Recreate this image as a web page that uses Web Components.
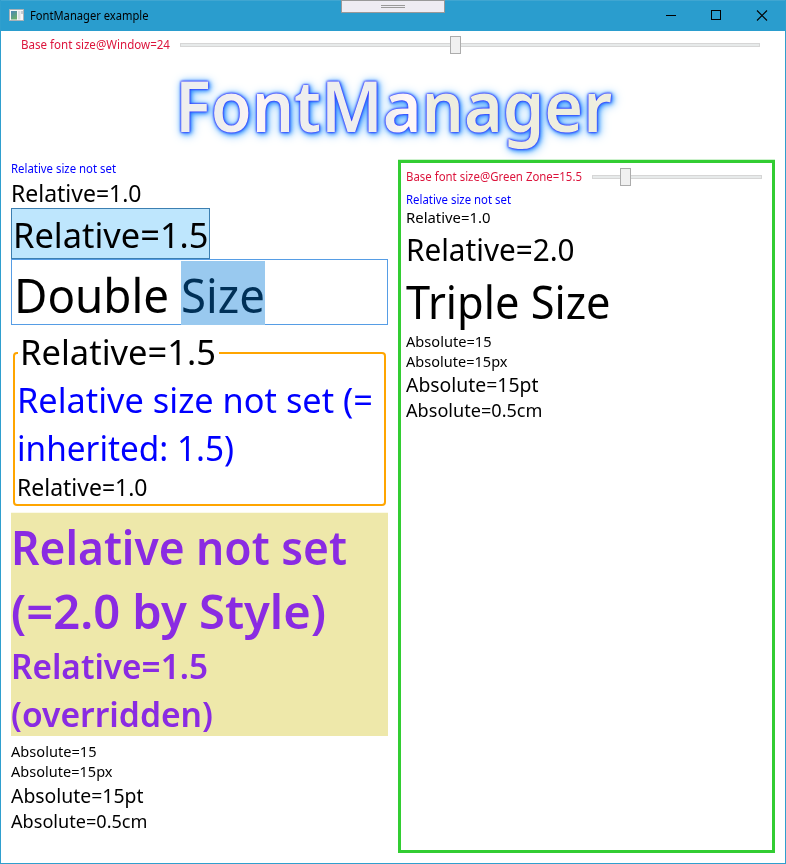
<!DOCTYPE html>
<html lang="en">
<head>
<meta charset="utf-8">
<title>FontManager example</title>
<style>
html, body { margin: 0; height: 100%; background: #fff; overflow: hidden; }
body { font-family: "Noto Sans", "Open Sans", sans-serif; color: #000; }
</style>
</head>
<body>
<app-window></app-window>
<script>
// One line of text: size sets the em, w the advance width, dy the baseline nudge.
class TextLine extends HTMLElement {
  connectedCallback() {
    const s = parseFloat(this.getAttribute('size'));
    const w = parseFloat(this.getAttribute('w'));
    const dy = parseFloat(this.getAttribute('dy') || '1');
    const root = this.attachShadow({ mode: 'open' });
    root.innerHTML = `<style>
      :host { display: block; flex: none; width: ${w}px; height: ${s * 1.33}px; white-space: pre; }
      span { display: block; width: max-content; font-size: ${s * 0.975}px; line-height: ${s * 1.33}px;
             padding-top: ${s * 0.036 + dy}px; transform-origin: 0 0;
             background: var(--text-fill, none); -webkit-background-clip: text; background-clip: text; }
    </style><span><slot></slot></span>`;
    const span = root.querySelector('span');
    const natural = span.getBoundingClientRect().width;
    if (natural) span.style.transform = `scaleX(${w / natural})`;
  }
}

class SizeSlider extends HTMLElement {
  connectedCallback() {
    const at = this.getAttribute('at');
    this.attachShadow({ mode: 'open' }).innerHTML = `<style>
      :host { display: flex; height: 18px; align-items: center; }
      .lead, .track { box-sizing: border-box; height: 4px; background: #e7eaea; border: 1px solid #d6d6d6; }
      .lead { flex: 0 0 ${at}px; border-right: 0; }
      .track { flex: 1; border-left: 0; }
      .thumb { box-sizing: border-box; flex: 0 0 11px; height: 18px; background: #f0f0f0; border: 1px solid #acacac; }
    </style><div class="lead"></div><div class="thumb"></div><div class="track"></div>`;
  }
}

class TitleBar extends HTMLElement {
  connectedCallback() {
    this.attachShadow({ mode: 'open' }).innerHTML = `<style>
      :host { display: flex; box-sizing: border-box; height: 31px; background: #2a9dce; border-top: 1px solid #40a6d1;
              padding-left: 8px; position: relative; align-items: flex-start; }
      .icon { margin: 7px 5px 0 0; }
      text-line { margin-top: 6px; }
      .buttons { margin-left: auto; display: flex; height: 29px; }
      .buttons svg { width: 45px; height: 29px; display: block; }
      .tab { position: absolute; left: 340px; top: -1px; width: 104px; height: 13px; box-sizing: border-box;
             background: #eeecf3; border: 1px solid #999; }
      .tab svg { display: block; margin: 3px 0 0 39px; }
    </style>
    <svg class="icon" width="16" height="15" viewBox="0 0 16 15">
      <defs><linearGradient id="g" x2="0.5" y2="1"><stop offset="0" stop-color="#4b87b8"/><stop offset="1" stop-color="#69ad6e"/></linearGradient></defs>
      <rect x=".5" y="1.5" width="14" height="11" fill="#f6f7f7" stroke="#a9b2b8"/>
      <rect x="2" y="3" width="6" height="8.500" fill="url(#g)"/>
      <rect x="9" y="3" width="2.500" height="8.500" fill="#dadfe3"/><rect x="12" y="3" width="2" height="3" fill="#c4ccd2"/>
    </svg>
    <text-line size="12" w="118.500"><slot></slot></text-line>
    <div class="buttons">
      <svg><path d="M16 14.500h10" stroke="#000"/></svg>
      <svg><rect x="16.500" y="9.500" width="9" height="9" fill="none" stroke="#000"/></svg>
      <svg><path d="M17 9.500l10 10M27 9.500l-10 10" stroke="#000" stroke-width="1.100" fill="none"/></svg>
    </div>
    <div class="tab"><svg width="24" height="4"><path d="M0 1.500h24M0 3.500h24" stroke="#999"/></svg></div>`;
  }
}

class GlowTitle extends HTMLElement {
  connectedCallback() {
    this.attachShadow({ mode: 'open' }).innerHTML = `<style>
      :host { display: flex; justify-content: center; height: 96px; position: relative; z-index: 1;
        filter: drop-shadow(0 0 .8px #2a2aff) drop-shadow(0 0 .6px #4646ff) drop-shadow(1px 1px 2px #1e80ff) drop-shadow(1px 1px 4px #7cc2ff); }
      text-line { font-weight: 600; color: transparent;
        --text-fill: linear-gradient(90deg, #eee 0 11%, #fff6f6 19%, #f4f1f1 23%, #eee 27% 48%, #fff7f7 53% 56%, #eeeedf 59% 100%); }
    </style><text-line size="72" w="437"><slot></slot></text-line>`;
  }
}

class HoverButton extends HTMLElement {
  connectedCallback() {
    this.attachShadow({ mode: 'open' }).innerHTML = `<style>
      :host { display: block; box-sizing: border-box; width: 199px; height: 51px; padding: 0 1px; background: #bee6fd; border: 1px solid #3c7fb1; }
    </style><slot></slot>`;
  }
}

class TextInput extends HTMLElement {
  connectedCallback() {
    this.attachShadow({ mode: 'open' }).innerHTML = `<style>
      :host { display: flex; box-sizing: border-box; height: 66px; padding: 0 2px; border: 1px solid #569de5; background: #fff; }
      ::slotted([selected]) { background: #99c9ef; color: #003057; margin-top: 1px; }
    </style><slot></slot>`;
  }
}

class GroupBox extends HTMLElement {
  connectedCallback() {
    this.attachShadow({ mode: 'open' }).innerHTML = `<style>
      :host { display: grid; margin: 1px 2px 0; grid-template-rows: 48px auto; }
      .frame { grid-area: 1 / 1 / 3 / 2; box-sizing: border-box; height: 154px; margin-top: 26px; border: 2px solid #ffa500; border-radius: 4px; }
      .head { grid-area: 1 / 1; justify-self: start; background: #fff; margin-left: 5px; padding: 0 3px 0 2px; z-index: 1; }
      .body { grid-area: 2 / 1; padding-left: 4px; }
    </style><div class="frame"></div><div class="head"><slot name="head"></slot></div><div class="body"><slot></slot></div>`;
  }
}

class StyledPanel extends HTMLElement {
  connectedCallback() {
    this.attachShadow({ mode: 'open' }).innerHTML = `<style>
      :host { display: block; height: 223px; margin: 7px 0 5px; background: #eee8aa; box-shadow: 0 -1px #fbfae9; color: #8a2be2; font-weight: 600; }
    </style><slot></slot>`;
  }
}

class GreenZone extends HTMLElement {
  connectedCallback() {
    this.attachShadow({ mode: 'open' }).innerHTML = `<style>
      :host { display: block; box-sizing: border-box; height: 693px; border: 3px solid #32cd32; box-shadow: 0 -1px #cdf1cd; padding: 5px 10px 0 5px; }
    </style><slot></slot>`;
  }
}

class AppWindow extends HTMLElement {
  connectedCallback() {
    this.attachShadow({ mode: 'open' }).innerHTML = `<style>
      :host { display: flex; flex-direction: column; box-sizing: border-box; width: 786px; height: 864px; border: 1px solid #2f9fce; border-top: 0; background: #fff; }
      .blue { color: #00f; }
      .row { display: flex; gap: 10px; color: #dc143c; }
      .row size-slider { flex: 1; }
      .top { padding: 5px 25px 0 20px; height: 18px; }
      .cols { display: grid; grid-template-columns: 377px 377px; gap: 10px; padding: 10px 10px 0; }
      .zone { height: 23px; }
    </style>
    <title-bar>FontManager example</title-bar>
    <div class="row top"><text-line size="12" w="149">Base font size@Window=24</text-line><size-slider at="270"></size-slider></div>
    <glow-title>FontManager</glow-title>
    <div class="cols">
      <div>
        <text-line class="blue" size="12" w="105">Relative size not set</text-line>
        <text-line size="24" w="130.5">Relative=1.0</text-line>
        <hover-button><text-line size="36" w="195.5">Relative=1.5</text-line></hover-button>
        <text-input><text-line size="48" w="167" dy="2">Double </text-line><text-line selected size="48" w="84">Size</text-line></text-input>
        <group-box>
          <text-line slot="head" size="36" w="196">Relative=1.5</text-line>
          <text-line class="blue" size="36" w="356">Relative size not set (=</text-line>
          <text-line class="blue" size="36" w="217">inherited: 1.5)</text-line>
          <text-line size="24" w="130.5" dy="2">Relative=1.0</text-line>
        </group-box>
        <styled-panel>
          <text-line size="48" w="336" dy="1.5">Relative not set</text-line>
          <text-line size="48" w="315" dy="1.500">(=2.0 by Style)</text-line>
          <text-line size="36" w="197" dy="0.5">Relative=1.5</text-line>
          <text-line size="36" w="202" dy="0.5">(overridden)</text-line>
        </styled-panel>
        <text-line size="15" w="85.5">Absolute=15</text-line>
        <text-line size="15" w="101.5">Absolute=15px</text-line>
        <text-line size="20" w="132.5" dy="2">Absolute=15pt</text-line>
        <text-line size="18.9" w="136.5" dy="0">Absolute=0.5cm</text-line>
      </div>
      <green-zone>
        <div class="row zone"><text-line size="12" w="176">Base font size@Green Zone=15.5</text-line><size-slider at="28"></size-slider></div>
        <text-line class="blue" size="12" w="105">Relative size not set</text-line>
        <text-line size="15.5" w="84.5" dy="-0.5">Relative=1.0</text-line>
        <text-line size="31" w="168.6" dy="0.5">Relative=2.0</text-line>
        <text-line size="46.5" w="204.5">Triple Size</text-line>
        <text-line size="15" w="85.5">Absolute=15</text-line>
        <text-line size="15" w="101.5">Absolute=15px</text-line>
        <text-line size="20" w="132.5">Absolute=15pt</text-line>
        <text-line size="18.9" w="136.5" dy="-0.5">Absolute=0.5cm</text-line>
      </green-zone>
    </div>`;
  }
}
customElements.define('text-line', TextLine);
customElements.define('size-slider', SizeSlider);
customElements.define('title-bar', TitleBar);
customElements.define('glow-title', GlowTitle);
customElements.define('hover-button', HoverButton);
customElements.define('text-input', TextInput);
customElements.define('group-box', GroupBox);
customElements.define('styled-panel', StyledPanel);
customElements.define('green-zone', GreenZone);
customElements.define('app-window', AppWindow);
</script>
</body>
</html>
